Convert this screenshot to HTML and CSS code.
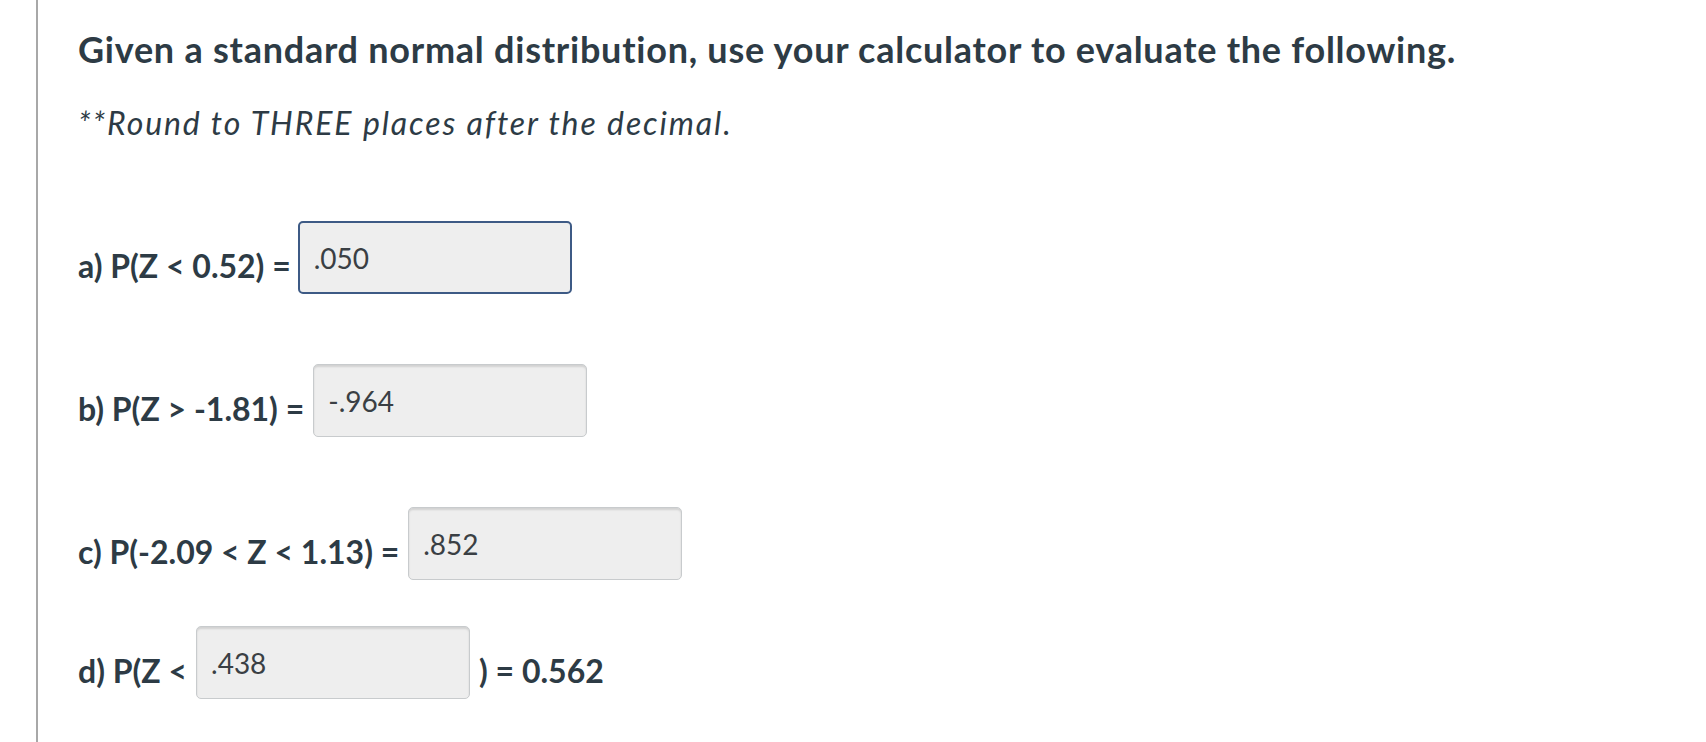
FILE: index.html
```html
<!DOCTYPE html>
<html lang="en">
<head>
<meta charset="utf-8">
<title>Standard normal distribution</title>
<link rel="stylesheet" href="styles.css">
</head>
<body>
<div class="page">
  <div class="content">
    <h1 class="title">Given a standard normal distribution, use your calculator to evaluate the following.</h1>
    <p class="note">**Round to THREE places after the decimal.</p>

    <div class="row row-a">
      <span class="label">a) P(Z &lt; 0.52) =</span>
      <div class="answer focused">.050</div>
    </div>

    <div class="row row-b">
      <span class="label">b) P(Z &gt; -1.81) =</span>
      <div class="answer">-.964</div>
    </div>

    <div class="row row-c">
      <span class="label">c) P(-2.09 &lt; Z &lt; 1.13) =</span>
      <div class="answer">.852</div>
    </div>

    <div class="row row-d">
      <span class="label">d) P(Z &lt;</span>
      <div class="answer">.438</div>
      <span class="label">) = 0.562</span>
    </div>
  </div>
</div>
</body>
</html>
```

FILE: styles.css
```css
html, body {
  margin: 0;
  padding: 0;
  background: #ffffff;
}

body {
  font-family: Lato, "Liberation Sans", sans-serif;
  color: #2d3b45;
  height: 742px;
  overflow: hidden;
}

.page {
  margin-left: 36px;
  border-left: 2px solid #a8a8a8;
  height: 742px;
}

.content {
  padding-left: 40px;
  padding-top: 28px;
  display: flex;
  flex-direction: column;
  align-items: flex-start;
}

.title {
  margin: 0;
  font-size: 36px;
  line-height: 42px;
  font-weight: 700;
  letter-spacing: 0.75px;
  white-space: nowrap;
}

.note {
  margin: 34px 0 0 0;
  font-size: 32px;
  line-height: 38px;
  font-style: italic;
  font-weight: 400;
  letter-spacing: 1.9px;
  white-space: nowrap;
}

.row {
  display: flex;
  align-items: center;
  gap: 9px;
}

.row-a { margin-top: 79px; gap: 7px; }
.row-b { margin-top: 70px; }
.row-c { margin-top: 70px; }
.row-d { margin-top: 46px; }

.label {
  font-size: 32px;
  font-weight: 700;
  line-height: 40px;
  padding-top: 16px;
  white-space: nowrap;
}

.answer {
  box-sizing: border-box;
  width: 274px;
  height: 73px;
  display: flex;
  align-items: center;
  padding: 0 14px;
  background: #eeeeee;
  border: 1px solid #c8cbcd;
  border-radius: 5px;
  box-shadow: inset 0 2px 2px rgba(0, 0, 0, 0.12);
  font-size: 28px;
  font-weight: 400;
  color: #3a3f44;
}

.answer.focused {
  border: 2px solid #3d5a85;
  box-shadow: none;
  padding-left: 14px;
}
```
